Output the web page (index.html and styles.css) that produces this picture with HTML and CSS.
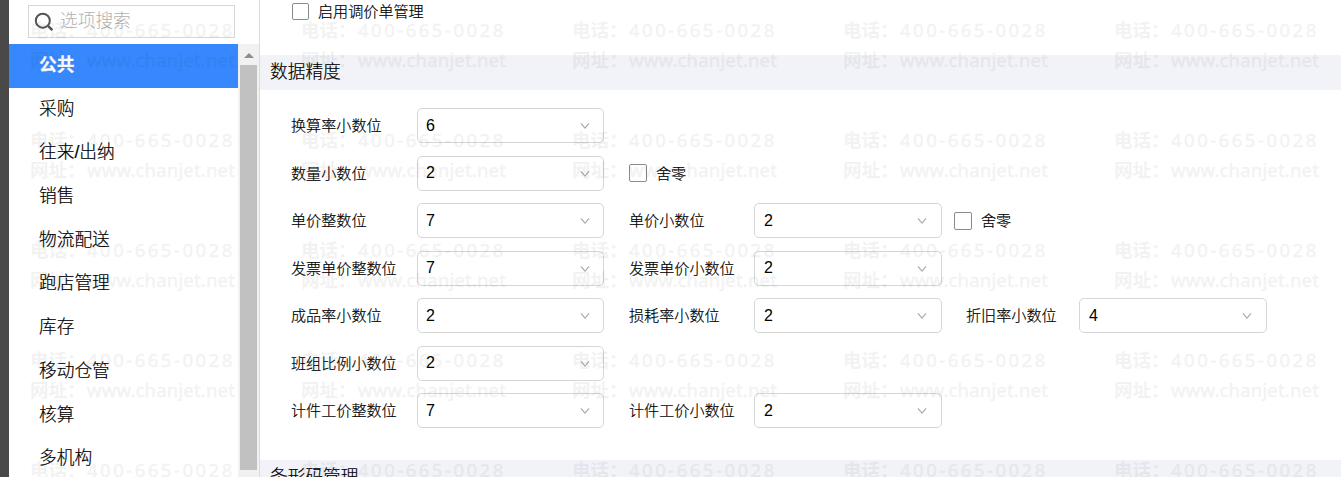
FILE: index.html
```html
<!DOCTYPE html>
<html lang="zh-CN">
<head>
<meta charset="utf-8">
<title>选项设置</title>
<link rel="stylesheet" href="styles.css">
</head>
<body>
<svg class="defs" width="0" height="0" aria-hidden="true">
  <symbol id="chevron" viewBox="0 0 10 8"><path d="M1 1.3 5 6.2 9 1.3" fill="none" stroke="#a8a8a8" stroke-width="1.1"/></symbol>
</svg>
<div class="app">
  <div class="rail"></div>
  <aside class="sidebar">
    <div class="search">
      <svg width="20" height="20" viewBox="0 0 20 20" fill="none" stroke="#555" stroke-width="2"><circle cx="8.8" cy="8.7" r="7"/><path d="M13.8 13.7 18.3 18.2" stroke-width="2.4"/></svg>
      <span>选项搜索</span>
    </div>
    <div class="side-body">
      <nav class="menu">
        <a class="item active">公共</a>
        <a class="item">采购</a>
        <a class="item">往来/出纳</a>
        <a class="item">销售</a>
        <a class="item">物流配送</a>
        <a class="item">跑店管理</a>
        <a class="item">库存</a>
        <a class="item">移动仓管</a>
        <a class="item">核算</a>
        <a class="item">多机构</a>
      </nav>
      <div class="scrollbar"><div class="arrow"></div><div class="thumb"></div></div>
    </div>
  </aside>
  <main class="main">
    <div class="top-option"><span class="check"></span><span class="caption">启用调价单管理</span></div>
    <h2 class="section">数据精度</h2>
    <div class="form">
      <div class="row"><label>换算率小数位</label><div class="select">6<svg><use href="#chevron"/></svg></div></div>
      <div class="row"><label>数量小数位</label><div class="select">2<svg><use href="#chevron"/></svg></div><div class="option"><span class="check"></span><span class="caption">舍零</span></div></div>
      <div class="row"><label>单价整数位</label><div class="select">7<svg><use href="#chevron"/></svg></div><label>单价小数位</label><div class="select">2<svg><use href="#chevron"/></svg></div><div class="option near"><span class="check"></span><span class="caption">舍零</span></div></div>
      <div class="row"><label>发票单价整数位</label><div class="select">7<svg><use href="#chevron"/></svg></div><label>发票单价小数位</label><div class="select">2<svg><use href="#chevron"/></svg></div></div>
      <div class="row"><label>成品率小数位</label><div class="select">2<svg><use href="#chevron"/></svg></div><label>损耗率小数位</label><div class="select">2<svg><use href="#chevron"/></svg></div><label class="third">折旧率小数位</label><div class="select">4<svg><use href="#chevron"/></svg></div></div>
      <div class="row"><label>班组比例小数位</label><div class="select">2<svg><use href="#chevron"/></svg></div></div>
      <div class="row"><label>计件工价整数位</label><div class="select">7<svg><use href="#chevron"/></svg></div><label>计件工价小数位</label><div class="select">2<svg><use href="#chevron"/></svg></div></div>
    </div>
    <h2 class="section">条形码管理</h2>
  </main>
</div>
<div class="watermark" id="watermark"></div>
<script src="watermark.js"></script>
</body>
</html>
```

FILE: styles.css
```css
* { box-sizing: border-box; }
body {
  margin: 0;
  height: 477px;
  overflow: hidden;
  background: #fff;
  color: #000;
  font-family: "Liberation Sans", "Noto Sans CJK SC", sans-serif;
  font-size: 15.1px;
}
.defs { position: absolute; }
.app { display: flex; height: 477px; overflow: hidden; }
.rail { width: 9px; flex: none; background: #494949; }

.sidebar {
  width: 251px;
  flex: none;
  display: flex;
  flex-direction: column;
  border-right: 1px solid #dcdcdc;
}
.search {
  display: flex;
  align-items: center;
  gap: 6px;
  flex: none;
  width: 207px;
  height: 33px;
  margin: 5px 0 6px 19px;
  padding-left: 5px;
  border: 1px solid #d6d6d6;
  color: #b0b0b0;
  font-size: 17.7px;
  font-weight: 300;
  line-height: 31px;
}
.search svg { flex: none; margin-top: 1px; }
.side-body { display: flex; flex: 1; min-height: 0; }
.menu { width: 229px; flex: none; overflow: hidden; }
.item {
  display: block;
  height: 43.7px;
  padding-left: 30px;
  font-size: 17.7px;
  font-weight: 300;
  line-height: 43.4px;
  -webkit-text-stroke: 0.2px currentColor;
}
.item.active { background: #3788ff; color: #fff; font-weight: 700; }
.scrollbar {
  flex: 1;
  display: flex;
  flex-direction: column;
  align-items: center;
  background: #f1f1f1;
}
.arrow {
  margin: 9px 0 7px;
  border: 5px solid transparent;
  border-top: 0;
  border-bottom-color: #8e8e8e;
}
.thumb { width: 17px; height: 405px; background: #c1c1c1; }

.main { flex: 1; min-width: 0; font-weight: 300; }
.top-option, .option { display: flex; align-items: center; gap: 9px; }
.top-option { height: 23px; margin-bottom: 32px; padding-left: 32px; }
.caption, .row label { padding-bottom: 3px; -webkit-text-stroke: 0.2px currentColor; }
.check {
  width: 18px;
  height: 18px;
  flex: none;
  border: 1px solid #8a8a8a;
  border-radius: 2px;
}
.top-option .check { width: 17px; height: 17px; }
.section {
  height: 35px;
  margin: 0;
  padding-left: 10px;
  background: #f2f3f8;
  font-size: 17.7px;
  font-weight: 300;
  line-height: 35px;
  -webkit-text-stroke: 0.2px currentColor;
}
.form {
  display: grid;
  grid-auto-rows: 35px;
  row-gap: 12.5px;
  height: 370px;
  padding: 18px 0 0 31px;
}
.row { display: flex; align-items: center; }
.row label { width: 126px; flex: none; }
.select {
  display: flex;
  align-items: center;
  justify-content: space-between;
  width: 187px;
  height: 35px;
  flex: none;
  padding: 0 13px 0 8px;
  border: 1px solid #d6d6d6;
  border-radius: 5px;
  font-size: 16px;
}
.select svg { width: 10px; height: 8px; margin-top: 1px; }
.select + label { width: 125px; margin-left: 25px; }
.select + label + .select { width: 188px; padding: 0 14px 0 9px; }
.select + .third { width: 113px; margin-left: 24px; }
.option { margin-left: 25px; }
.option.near { margin-left: 12px; }

/* Repeating watermark laid over the whole window */
.watermark {
  position: absolute;
  inset: 0;
  display: grid;
  grid-template-columns: repeat(5, 271px);
  grid-auto-rows: 110px;
  padding: 15px 0 0 30px;
  overflow: hidden;
  pointer-events: none;
  color: #000;
  opacity: 0.047;
  font-family: "Noto Sans", "Noto Sans CJK SC", sans-serif;
  font-size: 18.5px;
  font-weight: 400;
}
.mark { display: grid; grid-template-columns: 57px 1fr; grid-auto-rows: 30px; line-height: 30px; white-space: nowrap; }
.mark b { font-weight: 700; }
.mark span { -webkit-text-stroke: 0.5px currentColor; }
.phone { letter-spacing: 2.5px; }
.url { letter-spacing: 0.18px; }
```

FILE: watermark.js
```js
const cell = '<div class="mark"><b>电话：</b><span class="phone">400-665-0028</span><b>网址：</b><span class="url">www.chanjet.net</span></div>';
document.getElementById('watermark').innerHTML = cell.repeat(25);
```
